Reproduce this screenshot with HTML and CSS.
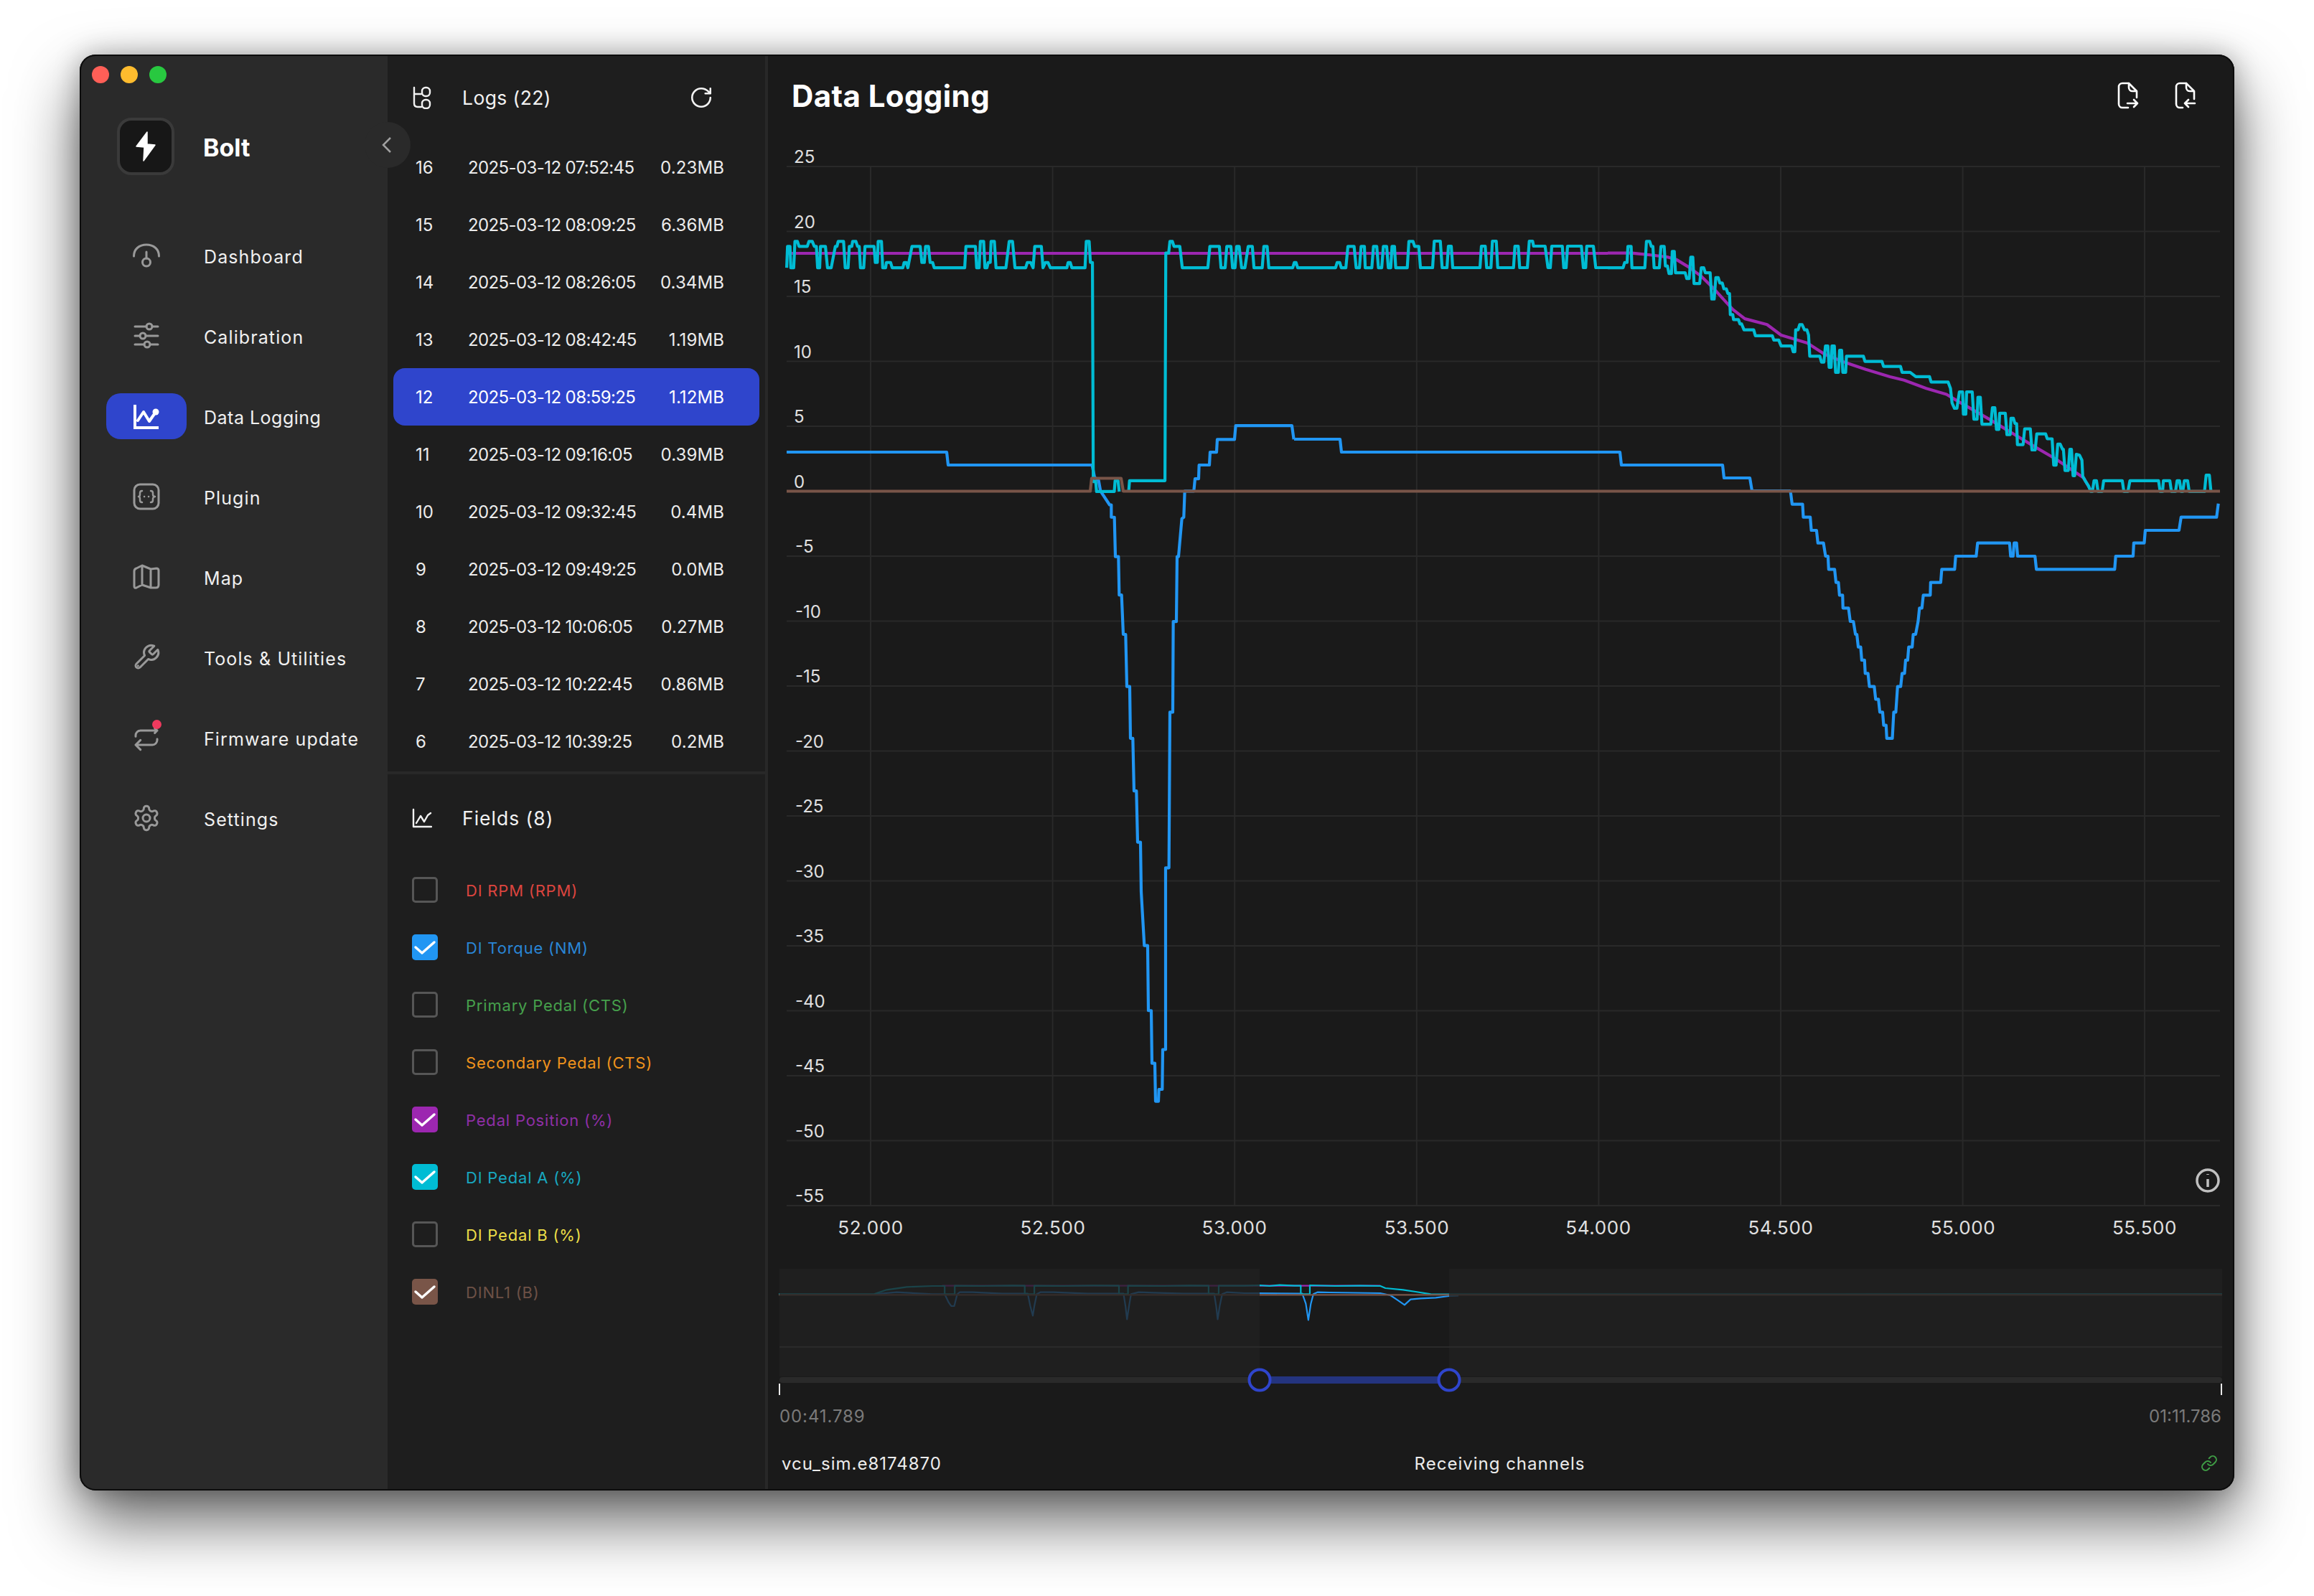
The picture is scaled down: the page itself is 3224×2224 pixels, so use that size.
FILE: index.html
```html
<!DOCTYPE html>
<html lang="en">
<head>
<meta charset="utf-8">
<title>Bolt - Data Logging</title>
<link rel="stylesheet" href="styles.css">
</head>
<body>
<div class="window">
  <aside class="sidebar">
    <div class="lights"><span class="light red"></span><span class="light amber"></span><span class="light green"></span></div>
    <div class="brand">
      <div class="logo"><svg width="30" height="44" viewBox="0 0 30 44"><path class="bolt" d="M17 2 2 22l11 1-1 19 16-22-11-1z"/></svg></div>
      <div class="brand-name">Bolt</div>
    </div>
    <button class="collapse"><svg width="14" height="24" viewBox="0 0 14 24"><path class="chev" d="M12 2 2 12l10 10"/></svg></button>
    <nav class="nav">
      <a class="nav-item"><span class="nav-icon"><svg class="ico" width="40" height="40" viewBox="0 0 40 40"><path d="M2.5 21C2.5 11 10 5 20 5s17.500 6 17.500 16M20 15v9"/><circle cx="20" cy="29.500" r="5.500"/></svg></span><span class="nav-label">Dashboard</span></a>
      <a class="nav-item"><span class="nav-icon"><svg class="ico" width="40" height="40" viewBox="0 0 40 40"><path d="M4 7h16M28 7h8M4 20h7M19 20h17M4 32h13M25 32h11"/><circle cx="24" cy="7" r="4"/><circle cx="15" cy="20" r="4"/><circle cx="21" cy="32" r="4"/></svg></span><span class="nav-label">Calibration</span></a>
      <a class="nav-item active"><span class="nav-icon"><svg class="ico" width="40" height="40" viewBox="0 0 40 40"><path d="M4 4v32h33"/><path d="M8 26l8-12 8 13 9-13"/><circle class="dot" cx="33" cy="14" r="4.500"/></svg></span><span class="nav-label">Data Logging</span></a>
      <a class="nav-item"><span class="nav-icon"><svg class="ico" width="40" height="40" viewBox="0 0 40 40"><rect x="3" y="3" width="34" height="34" rx="8"/><path class="thin" d="M14 12c-2 0-3 1-3 3v2c0 2-1 3-2 3 1 0 2 1 2 3v2c0 2 1 3 3 3M26 12c2 0 3 1 3 3v2c0 2 1 3 3 3-1 0-3 1-3 3v2c0 2-1 3-3 3"/><path class="thin" d="M17 20h.1M23 20h.1"/></svg></span><span class="nav-label">Plugin</span></a>
      <a class="nav-item"><span class="nav-icon"><svg class="ico" width="40" height="40" viewBox="0 0 40 40"><path d="M3 12q0-3 3-4l8-4 12 5 8-1q3 0 3 3v20q0 4-4 4h-7l-12-4-8 4q-3 1-3-2zM14 4v27M26 9v26"/></svg></span><span class="nav-label">Map</span></a>
      <a class="nav-item"><span class="nav-icon"><svg class="ico" width="40" height="40" viewBox="0 0 24 24"><path class="n" d="M14.700 6.300a1 1 0 0 0 0 1.400l1.600 1.600a1 1 0 0 0 1.400 0l3.770-3.770a6 6 0 0 1-7.940 7.940l-6.910 6.910a2.120 2.120 0 0 1-3-3l6.910-6.910a6 6 0 0 1 7.940-7.940l-3.760 3.760z"/><path class="n" d="M5 19h.01"/></svg></span><span class="nav-label">Tools &amp; Utilities</span></a>
      <a class="nav-item"><span class="nav-icon"><svg class="ico" width="40" height="40" viewBox="0 0 24 24"><path class="n" d="m19 4 2 2-2 2M3 11v-1a4 4 0 0 1 4-4h14M7 22l-4-4 4-4M21 13v1a4 4 0 0 1-4 4H3"/></svg><span class="badge"></span></span><span class="nav-label">Firmware update</span></a>
      <a class="nav-item"><span class="nav-icon"><svg class="ico" width="40" height="40" viewBox="0 0 24 24"><path class="n" d="M12.220 2h-.44a2 2 0 0 0-2 2v.18a2 2 0 0 1-1 1.730l-.43.25a2 2 0 0 1-2 0l-.15-.08a2 2 0 0 0-2.730.73l-.22.38a2 2 0 0 0 .73 2.730l.15.1a2 2 0 0 1 1 1.720v.51a2 2 0 0 1-1 1.740l-.15.09a2 2 0 0 0-.73 2.730l.22.38a2 2 0 0 0 2.730.73l.15-.08a2 2 0 0 1 2 0l.43.25a2 2 0 0 1 1 1.730V20a2 2 0 0 0 2 2h.44a2 2 0 0 0 2-2v-.18a2 2 0 0 1 1-1.730l.43-.25a2 2 0 0 1 2 0l.15.08a2 2 0 0 0 2.730-.73l.22-.39a2 2 0 0 0-.73-2.730l-.15-.08a2 2 0 0 1-1-1.740v-.5a2 2 0 0 1 1-1.740l.15-.09a2 2 0 0 0 .73-2.730l-.22-.38a2 2 0 0 0-2.730-.73l-.15.08a2 2 0 0 1-2 0l-.43-.25a2 2 0 0 1-1-1.730V4a2 2 0 0 0-2-2z"/><circle class="n" cx="12" cy="12" r="3"/></svg></span><span class="nav-label">Settings</span></a>
    </nav>
  </aside>

  <section class="panel">
    <header class="panel-head">
      <svg class="head-ico" width="28" height="32" viewBox="0 0 28 32"><path d="M3 2v22q0 5 5 5h5M3 11h10"/><rect x="14" y="2" width="11" height="12" rx="5"/><rect x="14" y="19" width="11" height="12" rx="5"/></svg>
      <span class="panel-title">Logs (22)</span>
      <svg class="refresh" width="34" height="34" viewBox="0 0 24 24"><path d="M21 12a9 9 0 1 1-9-9c2.520 0 4.930 1 6.740 2.740L21 8M21 3v5h-5"/></svg>
    </header>
    <ul class="logs">
      <li class="log"><span class="log-id">16</span><span class="log-date">2025-03-12 07:52:45</span><span class="log-size">0.23MB</span></li>
      <li class="log"><span class="log-id">15</span><span class="log-date">2025-03-12 08:09:25</span><span class="log-size">6.36MB</span></li>
      <li class="log"><span class="log-id">14</span><span class="log-date">2025-03-12 08:26:05</span><span class="log-size">0.34MB</span></li>
      <li class="log"><span class="log-id">13</span><span class="log-date">2025-03-12 08:42:45</span><span class="log-size">1.19MB</span></li>
      <li class="log selected"><span class="log-id">12</span><span class="log-date">2025-03-12 08:59:25</span><span class="log-size">1.12MB</span></li>
      <li class="log"><span class="log-id">11</span><span class="log-date">2025-03-12 09:16:05</span><span class="log-size">0.39MB</span></li>
      <li class="log"><span class="log-id">10</span><span class="log-date">2025-03-12 09:32:45</span><span class="log-size">0.4MB</span></li>
      <li class="log"><span class="log-id">9</span><span class="log-date">2025-03-12 09:49:25</span><span class="log-size">0.0MB</span></li>
      <li class="log"><span class="log-id">8</span><span class="log-date">2025-03-12 10:06:05</span><span class="log-size">0.27MB</span></li>
      <li class="log"><span class="log-id">7</span><span class="log-date">2025-03-12 10:22:45</span><span class="log-size">0.86MB</span></li>
      <li class="log"><span class="log-id">6</span><span class="log-date">2025-03-12 10:39:25</span><span class="log-size">0.2MB</span></li>
    </ul>
    <div class="divider"></div>
    <header class="panel-head fields-head">
      <svg class="head-ico" width="28" height="28" viewBox="0 0 28 28"><path d="M2 2v24h25M6 21l6-10 5 8 5-9 4-3"/></svg>
      <span class="panel-title">Fields (8)</span>
    </header>
    <ul class="fields">
      <li class="field c-red"><span class="box"></span><span class="field-name">DI RPM (RPM)</span></li>
      <li class="field c-blue"><span class="box on"><svg class="check" width="36" height="36" viewBox="0 0 36 36"><path d="M5 18l9 8 17-15"/></svg></span><span class="field-name">DI Torque (NM)</span></li>
      <li class="field c-green"><span class="box"></span><span class="field-name">Primary Pedal (CTS)</span></li>
      <li class="field c-orange"><span class="box"></span><span class="field-name">Secondary Pedal (CTS)</span></li>
      <li class="field c-purple"><span class="box on"><svg class="check" width="36" height="36" viewBox="0 0 36 36"><path d="M5 18l9 8 17-15"/></svg></span><span class="field-name">Pedal Position (%)</span></li>
      <li class="field c-cyan"><span class="box on"><svg class="check" width="36" height="36" viewBox="0 0 36 36"><path d="M5 18l9 8 17-15"/></svg></span><span class="field-name">DI Pedal A (%)</span></li>
      <li class="field c-yellow"><span class="box"></span><span class="field-name">DI Pedal B (%)</span></li>
      <li class="field c-brown"><span class="box on"><svg class="check" width="36" height="36" viewBox="0 0 36 36"><path d="M5 18l9 8 17-15"/></svg></span><span class="field-name">DINL1 (B)</span></li>
    </ul>
  </section>

  <main class="main">
    <header class="main-head">
      <h1 class="title">Data Logging</h1>
      <div class="actions">
        <svg class="file-ico" width="32" height="38" viewBox="0 0 32 38"><path d="M17 2H8a5 5 0 0 0-5 5v24a5 5 0 0 0 5 5h8M17 2l11 11v9M17 2v6a5 5 0 0 0 5 5h6M15 30h14M24 25l5 5-5 5"/></svg>
        <svg class="file-ico" width="32" height="38" viewBox="0 0 32 38"><path d="M17 2H8a5 5 0 0 0-5 5v24a5 5 0 0 0 5 5h4M17 2l11 11v11M17 2v6a5 5 0 0 0 5 5h6M29 30H15M20 25l-5 5 5 5"/></svg>
      </div>
    </header>

    <svg class="chart" viewBox="1070 190 2043 1560">
      <path class="grid" d="M1096 232H3093M1096 322.500H3093M1096 413H3093M1096 503.500H3093M1096 594H3093M1096 684.500H3093M1096 775H3093M1096 865.500H3093M1096 956H3093M1096 1046.500H3093M1096 1137H3093M1096 1227.500H3093M1096 1318H3093M1096 1408.500H3093M1096 1499H3093M1096 1589.500H3093M1096 1680H3093M1213 232V1680M1466.600 232V1680M1720.200 232V1680M1973.800 232V1680M2227.400 232V1680M2481 232V1680M2734.600 232V1680M2988 232V1680"/>
      <g class="axis">
        <text x="1106" y="227">25</text><text x="1106" y="318">20</text><text x="1106" y="408">15</text><text x="1106" y="499">10</text><text x="1106" y="589">5</text><text x="1106" y="680">0</text>
        <text x="1108" y="770">-5</text><text x="1108" y="861">-10</text><text x="1108" y="951">-15</text><text x="1108" y="1042">-20</text><text x="1108" y="1132">-25</text><text x="1108" y="1223">-30</text><text x="1108" y="1313">-35</text><text x="1108" y="1404">-40</text><text x="1108" y="1494">-45</text><text x="1108" y="1585">-50</text><text x="1108" y="1675">-55</text>
      </g>
      <g class="axis centered">
        <text x="1213" y="1720">52.000</text><text x="1467" y="1720">52.500</text><text x="1720" y="1720">53.000</text><text x="1974" y="1720">53.500</text><text x="2227" y="1720">54.000</text><text x="2481" y="1720">54.500</text><text x="2735" y="1720">55.000</text><text x="2988" y="1720">55.500</text>
      </g>

      <!-- Torque -->
      <polyline class="line blue" points="1096,630 1319,630 1321,648 1522,648"/>
      <g transform="translate(1440 560) scale(.3333 .6378)">
        <polyline class="line blue" points="245,138 255,165 272,172 280,195 318,225 325,225 325,252 338,252 342,338 355,338 358,422 368,422 375,508 385,508 390,622 402,622 405,735 415,735 420,850 430,850 435,962 447,962 450,1070 463,1188 477,1188 480,1330 492,1330 495,1445 507,1445 510,1528 522,1528 524,1502 538,1502 540,1415 552,1415 552,1018 566,1018 570,678 582,678 584,480 597,480 600,338 606,338 620,255 628,252 632,195 670,195 675,168 690,168 692,138 735,138 738,110 765,110 768,82 840,82 845,52 1080,52 1088,82"/>
      </g>
      <polyline class="line blue" points="1803,612 1867,612 1869,630 2257,630 2259,648 2400,648 2402,666 2438,666 2441,684 2495,684"/>
      <g transform="translate(2400 640) scale(.4847 .3333)">
        <polyline class="line blue" points="195,132 200,188 230,188 232,242 252,242 255,297 270,297 274,350 290,350 296,405 303,405 305,460 322,460 326,515 333,515 336,568 345,568 346,622 362,622 367,678 376,678 382,732 386,732 390,785 397,785 400,840 408,840 410,895 418,895 422,950 436,950 440,1003 448,1003 452,1057 460,1057 463,1112 470,1112 472,1167 488,1167 492,1057 498,1057 503,950 512,950 516,895 523,895 526,840 532,840 535,785 545,785 548,732 555,732 562,678 566,622 573,622 577,568 597,568 598,515 627,515 630,460 667,460 670,405 729,405 733,350 825,350 828,405 835,405 838,350 845,350 848,405 898,405 902,460 1127,460 1130,405 1180,405 1182,350 1212,350 1215,297 1312,297 1318,242 1420,242 1425,185"/>
      </g>

      <!-- Pedal position -->
      <polyline class="line purple" points="1096,353 2240,353"/>
      <g transform="translate(2240 80) scale(.5618 .4082)">
        <polyline class="line purple" points="0,668 60,668 110,675 150,682 170,690 200,715 230,745 260,785 290,830 310,860 340,892 395,912 430,948 495,975 540,1015 590,1042 640,1065 700,1090 735,1102 790,1130 840,1150 870,1175 940,1230 1000,1280 1060,1330 1110,1370 1180,1435 1200,1482"/>
      </g>

      <!-- Pedal A -->
      <g transform="translate(1080 80) scale(.5741 .4082)">
        <polyline class="line cyan" points="28,718 30,645 36,645 38,718 45,718 48,628 54,628 58,645 78,645 82,628 90,628 95,645 100,645 103,718 108,718 110,645 122,645 127,718 136,718 146,645 150,645 153,628 166,628 170,718 177,718 180,645 186,645 188,628 196,628 200,645 204,645 207,718 215,718 218,645 240,645 243,700 248,700 250,628 258,628 261,718 268,718 270,700 280,700 284,718 310,718 313,700 318,700 322,718 332,645 352,645 356,700 362,700 365,645 372,645 376,700 382,700 386,718 460,718 463,645 486,645 489,718 495,718 498,628 506,628 509,718 514,718 517,700 522,700 524,628 532,628 536,718 560,718 568,628 576,628 582,718 608,718 612,700 620,700 626,718 630,645 646,645 650,718 656,700 662,700 668,718 708,718 711,700 716,700 720,718 752,718 755,628 762,628 765,700 770,700 772,1448 778,1448 780,1482 823,1482 825,1445 832,1445 835,1482"/>
        <polyline class="line cyan" points="858,1482 860,1445 946,1445 948,668 955,668 958,628 964,628 968,645 982,645 988,718 1050,718 1055,645 1078,645 1082,718 1092,718 1096,645 1106,645 1110,718 1116,718 1120,645 1126,645 1132,718 1140,718 1148,645 1158,645 1162,718 1182,718 1186,645 1194,645 1198,718 1256,718 1260,700 1264,700 1268,718 1360,718 1364,700 1370,700 1374,718 1385,718 1390,645 1405,645 1410,718 1418,718 1422,645 1430,645 1432,718 1448,718 1452,645 1460,645 1464,718 1472,718 1476,645 1484,645 1488,718 1494,718 1497,645 1503,645 1506,718 1534,718 1538,628 1548,628 1552,645 1562,645 1566,718 1568,718"/>
      </g>
      <polyline class="line cyan" points="1980,373 1996,373 1998.300,336 2006.700,336 2009.300,373 2016,373 2018,343 2022,343 2024,373 2062,373 2064,343 2069.300,343 2071.300,373 2077.300,373 2079.300,336 2084.700,336 2086.700,373 2108.700,373 2110.700,343 2115.300,343 2117.300,373 2128,373 2130.700,336 2135.300,336 2136.700,343 2152.700,343 2156.700,373 2160,373 2162,343 2176.700,343 2178.700,373 2182,373 2184,343 2203.300,343 2206,373 2209.300,373 2210.700,343 2220,343 2223.300,373 2240,373"/>
      <g transform="translate(2240 80) scale(.5618 .4082)">
        <polyline class="line cyan" points="0,718 38,718 42,700 48,700 50,645 58,645 60,718 92,718 96,628 104,628 108,645 112,645 115,718 128,718 132,645 140,645 143,712 148,712 152,738 158,738 160,662 165,662 168,735 192,735 196,755 202,755 206,682 211,682 214,772 228,772 232,718 238,718 242,735 254,735 258,825 264,825 268,752 274,752 278,770 284,770 288,790 294,790 298,806 302,806 304,878 310,878 312,895 324,895 328,910 332,910 338,930 362,930 366,950 408,950 412,965 424,965 430,985 456,985 460,1005 464,1005 466,930 472,930 476,912 482,912 488,930 494,930 498,948 501,1020 526,1020 530,1040 536,1040 540,985 546,985 549,1058 554,1058 556,985 562,985 565,1075 572,1075 575,1000 580,1000 583,1075 590,1075 592,1020 634,1020 638,1038 680,1038 684,1055 726,1055 730,1075 750,1075 764,1090 798,1090 802,1108 844,1108 850,1130 854,1180 860,1198 866,1198 872,1142 880,1142 882,1218 888,1218 890,1142 904,1142 908,1235 916,1235 918,1160 924,1160 928,1252 950,1252 954,1196 960,1196 964,1270 970,1270 972,1215 986,1215 990,1288 998,1288 1000,1232 1006,1232 1010,1250 1014,1250 1016,1322 1030,1322 1034,1268 1048,1268 1052,1340 1060,1340 1064,1285 1086,1285 1090,1302 1102,1302 1106,1392 1112,1392 1116,1320 1122,1320 1128,1338 1130,1338 1134,1410 1142,1410 1146,1338 1150,1338 1154,1428 1158,1428 1162,1355 1170,1358 1176,1375 1178,1430 1184,1445 1192,1462 1198,1482 1202,1482 1206,1445 1212,1445 1216,1482 1226,1482 1230,1445 1276,1445 1280,1482 1290,1482 1295,1445 1366,1445 1370,1482 1376,1482 1378,1445 1394,1445 1398,1482 1408,1482 1412,1445 1418,1445 1422,1482 1426,1482 1430,1445 1438,1445 1442,1482 1480,1482 1484,1426 1492,1426 1496,1482"/>
      </g>

      <!-- DINL1 -->
      <polyline class="line brown" points="1096,684.500 1519,684.500 1521,666.500 1562,666.500 1565,684.500 3093,684.500"/>

      <g class="info">
        <circle cx="3076" cy="1645" r="15"/>
        <path d="M3076 1643v11M3076 1636v1"/>
      </g>
    </svg>

    <svg class="minimap" viewBox="1070 1750 2043 200">
      <rect class="mm-bg" x="1086" y="1768" width="2010" height="150"/>
      <g transform="translate(1060 1740) scale(.7018 .3333)">
        <polyline class="mini purple" points="360,155 1230,155"/>
        <polyline class="mini blue" points="225,190 270,182 340,190 365,190 373,225 378,240 384,240 390,190 395,182 420,182 480,188 530,188 535,240 540,280 543,240 548,190 555,182 580,182 650,188 720,188 724,240 727,295 731,240 735,190 750,182 780,184 840,188 900,188 904,240 907,295 911,240 916,190 925,182 960,186 990,186 1075,188 1082,230 1087,298 1092,230 1097,190 1105,182 1130,183 1230,186 1250,195 1262,212 1278,235 1290,212 1310,208 1340,205 1366,198 1385,196"/>
        <polyline class="mini cyan" points="36,190 225,190 250,172 290,160 340,156 365,156 365,190 385,190 385,155 440,156 500,154 524,155 524,190 543,190 543,155 600,156 660,154 711,155 711,190 729,190 729,155 800,156 850,154 889,155 889,190 909,190 909,155 960,155 990,153 1010,156 1030,152 1060,155 1072,155 1072,190 1090,190 1090,153 1140,156 1190,155 1230,156 1240,165 1275,172 1300,180 1330,190 1366,191 2901,190"/>
        <polyline class="mini brown" points="36,193 2901,193"/>
      </g>
      <rect class="mm-dim" x="1086" y="1768" width="669" height="150"/>
      <rect class="mm-dim" x="2019" y="1768" width="1077" height="150"/>
      <path class="mm-line" d="M1086 1877H3096"/>
      <rect class="mm-track" x="1086" y="1919" width="2010" height="8" rx="4"/>
      <rect class="mm-range" x="1755" y="1918" width="264" height="10"/>
      <circle class="mm-handle" cx="1755" cy="1923" r="14.500"/>
      <circle class="mm-handle" cx="2019" cy="1923" r="14.500"/>
      <path class="mm-tick" d="M1086 1928v16M3095 1928v16"/>
    </svg>

    <div class="times"><span class="time-start">00:41.789</span><span>01:11.786</span></div>
    <footer class="status">
      <span>vcu_sim.e8174870</span>
      <span class="status-mid">Receiving channels</span>
      <svg class="link-ico" width="24" height="24" viewBox="0 0 24 24"><path d="M10 13a5 5 0 0 0 7.540.54l3-3a5 5 0 0 0-7.070-7.070l-1.720 1.710M14 11a5 5 0 0 0-7.540-.54l-3 3a5 5 0 0 0 7.070 7.070l1.710-1.710"/></svg>
    </footer>
  </main>
</div>
</body>
</html>
```
FILE: styles.css
```css
* { box-sizing: border-box; }
html, body { margin: 0; height: 100%; }
body {
  background: #fff;
  font-family: Inter, "Noto Sans", sans-serif;
  color: #f2f2f2;
  padding: 76px 0 0 111px;
  overflow: hidden;
}
ul { list-style: none; margin: 0; padding: 0; }

.window {
  display: flex;
  width: 3002px;
  height: 2001px;
  border-radius: 22px;
  overflow: hidden;
  background: #1a1a1a;
  position: relative;
}
.window::after {
  content: "";
  position: absolute;
  inset: 0;
  border-radius: 22px;
  pointer-events: none;
  box-shadow: inset 0 0 0 2px #0c0c0c;
}
body::before {
  content: "";
  position: absolute;
  left: 111px;
  top: 76px;
  width: 3002px;
  height: 2001px;
  border-radius: 22px;
  box-shadow: 0 42px 90px rgba(0, 0, 0, .62), 0 0 36px rgba(0, 0, 0, .28);
}

/* Sidebar */
.sidebar {
  flex: 0 0 429px;
  background: #2a2a2a;
  position: relative;
}
.lights { display: flex; gap: 16px; padding: 16px 0 0 17px; }
.light { width: 24px; height: 24px; border-radius: 50%; }
.red { background: #ff5f57; }
.amber { background: #febc2e; }
.green { background: #28c840; }

.brand { display: flex; align-items: center; margin: 48px 0 0 52px; }
.logo {
  width: 80px;
  height: 80px;
  border-radius: 20px;
  background: #171717;
  border: 4px solid #3a3a3a;
  display: flex;
  align-items: center;
  justify-content: center;
}
.bolt { fill: #fff; stroke: #fff; stroke-width: 1.500; stroke-linejoin: round; }
.brand-name { margin-left: 40px; padding-top: 3px; font-size: 34px; font-weight: 700; color: #fff; }

.collapse {
  position: absolute;
  left: 397px;
  top: 94px;
  width: 64px;
  height: 64px;
  border-radius: 50%;
  border: 0;
  padding: 0 2px 0 0;
  background: #2a2a2a;
  display: flex;
  align-items: center;
  justify-content: center;
  z-index: 3;
}
.chev { fill: none; stroke: #a0a0a0; stroke-width: 2.500; }

.nav { margin-top: 56px; display: flex; flex-direction: column; }
.nav-item { display: flex; align-items: center; height: 112px; padding-left: 37px; }
.nav-icon {
  position: relative;
  width: 112px;
  height: 64px;
  border-radius: 20px;
  display: flex;
  align-items: center;
  justify-content: center;
  margin-right: 24px;
  flex: none;
}
.nav-label { font-size: 25px; letter-spacing: 1.100px; color: #f0f0f0; padding-top: 3px; }
.active .nav-label { letter-spacing: .5px; }
.active .nav-icon { background: #2f45cc; }
.ico { fill: none; stroke: #999; stroke-width: 3; stroke-linecap: round; stroke-linejoin: round; }
.ico .n { stroke-width: 1.800; }
.ico .thin { stroke-width: 2.500; }
.active .ico { stroke: #fff; stroke-width: 4; }
.active .ico path:first-child { stroke-linecap: butt; stroke-linejoin: miter; }
.active .ico .dot { fill: #fff; stroke: none; }
.badge {
  position: absolute;
  left: 64px;
  top: 7px;
  width: 13px;
  height: 13px;
  border-radius: 50%;
  background: #ee3a5e;
}

/* Logs panel */
.panel {
  flex: 0 0 530px;
  background: #1e1e1e;
  border-right: 4px solid #282828;
  display: flex;
  flex-direction: column;
}
.panel-head {
  display: flex;
  align-items: center;
  height: 88px;
  margin-top: 16px;
  margin-bottom: 13px;
  padding-left: 34px;
  flex: none;
}
.fields-head { margin-top: 17px; margin-bottom: 16px; }
.head-ico { fill: none; stroke: #f2f2f2; stroke-width: 2.400; stroke-linecap: round; stroke-linejoin: round; flex: none; }
.panel-title { font-size: 26.500px; margin-left: 42px; letter-spacing: .4px; color: #f2f2f2; }
.fields-head .panel-title { letter-spacing: 1px; }
.refresh { margin-left: 192px; fill: none; stroke: #f2f2f2; stroke-width: 1.800; stroke-linecap: round; stroke-linejoin: round; }

.log {
  display: flex;
  align-items: center;
  height: 80px;
  margin: 0 8px;
  padding: 0 49px 0 31px;
  font-size: 24px;
  letter-spacing: .1px;
  color: #ececec;
  border-radius: 16px;
}
.log-id { width: 73px; flex: none; }
.log-date { letter-spacing: -.6px; }
.log-size { margin-left: auto; }
.selected { background: #2f45cc; color: #fff; }
.divider { height: 4px; background: #282828; margin-top: 2px; flex: none; }

.field { display: flex; align-items: center; height: 80px; padding-left: 34px; font-size: 22px; letter-spacing: .8px; }
.field-name { padding-top: 2px; }
.box {
  width: 36px;
  height: 36px;
  border-radius: 5px;
  border: 3px solid #565656;
  margin-right: 39px;
  flex: none;
  position: relative;
}
.box.on { border: 0; }
.check { display: block; fill: none; stroke: #fff; stroke-width: 3.500; stroke-linecap: round; stroke-linejoin: round; }
.c-red { color: #dc453f; }
.c-blue { color: #2a86d6; }
.c-blue .box { background: #2196f3; }
.c-green { color: #46a04c; }
.c-orange { color: #f0931c; }
.c-purple { color: #8f2fa6; }
.c-purple .box { background: #9c27b0; }
.c-cyan { color: #18a8c0; }
.c-cyan .box { background: #00bcd4; }
.c-yellow { color: #ecdf48; }
.c-brown { color: #6d5146; }
.c-brown .box { background: #795548; }

/* Main */
.main { flex: 1; min-width: 0; display: flex; flex-direction: column; background: #1a1a1a; }
.main-head {
  display: flex;
  align-items: center;
  justify-content: space-between;
  height: 114px;
  padding: 0 52px 0 33px;
  flex: none;
}
.title { margin: 0; font-size: 42px; font-weight: 700; color: #fff; letter-spacing: .4px; }
.actions { display: flex; gap: 48px; }
.file-ico { fill: none; stroke: #fff; stroke-width: 2.600; stroke-linecap: round; stroke-linejoin: round; display: block; }

.chart { display: block; width: 2043px; height: 1560px; flex: none; }
.grid { fill: none; stroke: #292929; stroke-width: 2; }
.axis text { font-family: Inter, "Noto Sans", sans-serif; font-size: 24px; fill: #e0e0e0; }
.axis.centered text { text-anchor: middle; font-size: 26px; letter-spacing: .6px; }
.line { fill: none; stroke-width: 4.200; stroke-linejoin: round; vector-effect: non-scaling-stroke; }
.mini { fill: none; stroke-width: 2.200; stroke-linejoin: round; vector-effect: non-scaling-stroke; }
.blue { stroke: #2196f3; }
.purple { stroke: #9c27b0; }
.cyan { stroke: #00bcd4; }
.brown { stroke: #795548; }
.info circle { fill: none; stroke: #c0c0c0; stroke-width: 3.500; }
.info path { fill: none; stroke: #c0c0c0; stroke-width: 3.500; }

.minimap { display: block; width: 2043px; height: 200px; flex: none; }
.mm-bg { fill: #1a1a1a; }
.mm-dim { fill: #212121; fill-opacity: .78; }
.mm-line { stroke: #2a2a2a; stroke-width: 2; fill: none; }
.mm-track { fill: #2a2a2a; }
.mm-range { fill: #24347f; }
.mm-handle { fill: #1a1a1a; stroke: #2f45cc; stroke-width: 4; }
.mm-tick { stroke: #e8e8e8; stroke-width: 2; fill: none; }

.times {
  display: flex;
  justify-content: space-between;
  align-items: center;
  height: 46px;
  padding: 0 18px 0 16px;
  font-size: 24px;
  color: #7a7a7a;
  flex: none;
}
.time-start { letter-spacing: .9px; }
.status {
  display: grid;
  grid-template-columns: 1fr auto 1fr;
  align-items: center;
  flex: 1;
  padding: 5px 23px 0 19px;
  font-size: 24px;
  letter-spacing: 1px;
  color: #ececec;
}
.link-ico { justify-self: end; fill: none; stroke: #3f9c45; stroke-width: 2; stroke-linecap: round; stroke-linejoin: round; }
```
